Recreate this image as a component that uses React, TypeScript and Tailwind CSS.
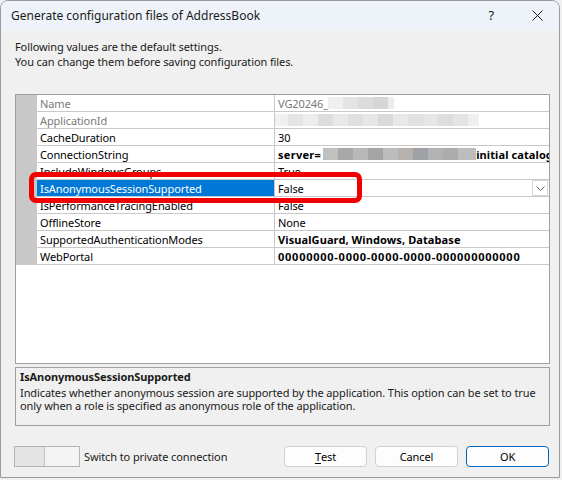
import React from 'react';

const font = "font-['Noto_Sans',sans-serif]";

// pixelated "blur" swatches covering redacted values
const nameBlur = ['bg-[#efefef]', 'bg-[#e4e4e4]', 'bg-[#dcdcdc]', 'bg-[#d6d6d6]', 'bg-[#ececec]'];
const appIdBlur = [
  'bg-[#f0f0f0]', 'bg-[#e4e4e4]', 'bg-[#ececec]', 'bg-[#dcdcdc]', 'bg-[#e8e8e8]', 'bg-[#e0e0e0]', 'bg-[#e6e6e6]',
  'bg-[#dadada]', 'bg-[#e8e8e8]', 'bg-[#e2e2e2]', 'bg-[#e6e6e6]', 'bg-[#dedede]', 'bg-[#e4e4e4]', 'bg-[#efefef]',
];
const connBlur = [
  'bg-[#c0c0c0]', 'bg-[#a8a8a8]', 'bg-[#b8b8b8]', 'bg-[#a4a4a4]', 'bg-[#bcbcbc]',
  'bg-[#b6b1ac]', 'bg-[#9ea2a6]', 'bg-[#b2b2b2]', 'bg-[#acacac]', 'bg-[#bdbdbd]',
];

function Blur({ colors, last = 15 }: { colors: string[]; last?: number }) {
  return (
    <div className="flex h-[12px] shrink-0">
      {colors.map((c, i) => (
        <div key={i} className={`${c} h-full`} style={{ width: i === colors.length - 1 ? last : 15 }} />
      ))}
    </div>
  );
}

type Row = { name: string; muted?: boolean; selected?: boolean; value: React.ReactNode };

const rows: Row[] = [
  {
    name: 'Name',
    muted: true,
    value: (
      <div className="flex items-center text-[#7a7a7a]">
        <span>VG20246_</span>
        <Blur colors={nameBlur} last={6} />
      </div>
    ),
  },
  {
    name: 'ApplicationId',
    muted: true,
    value: (
      <div className="-ml-[5px]">
        <Blur colors={appIdBlur} last={11} />
      </div>
    ),
  },
  { name: 'CacheDuration', value: <span>30</span> },
  {
    name: 'ConnectionString',
    value: (
      <div className="flex items-center font-bold whitespace-nowrap">
        <span className="tracking-[0.3px]">server=</span>
        <div className="ml-[2px]">
          <Blur colors={connBlur} last={18} />
        </div>
        <span className="tracking-[0.1px]">initial catalog=AddressBook</span>
      </div>
    ),
  },
  { name: 'IncludeWindowsGroups', value: <span>True</span> },
  { name: 'IsAnonymousSessionSupported', selected: true, value: <span>False</span> },
  { name: 'IsPerformanceTracingEnabled', value: <span>False</span> },
  { name: 'OfflineStore', value: <span>None</span> },
  {
    name: 'SupportedAuthenticationModes',
    value: <span className="font-bold tracking-[0.1px]">VisualGuard, Windows, Database</span>,
  },
  {
    name: 'WebPortal',
    value: <span className="font-bold tracking-[0.75px]">00000000-0000-0000-0000-000000000000</span>,
  },
];

function PropertyGrid() {
  return (
    <div className="relative h-[270px] border border-[#a0a0a0] bg-white">
      <div className="flex flex-col">
        {rows.map((r) => (
          <div key={r.name} className="flex h-[17px]">
            <div className="w-[21px] shrink-0 bg-[#c8c8c8]" />
            <div
              className={`flex w-[238px] shrink-0 items-center whitespace-nowrap border-b border-r border-[#c8c8c8] pl-[3px] ${
                r.selected ? 'bg-[#0078d7] text-white' : r.muted ? 'text-[#7a7a7a]' : 'text-black'
              }`}
            >
              {r.name}
            </div>
            <div className="flex min-w-0 flex-1 items-center overflow-hidden border-b border-[#c8c8c8] pl-[3px] pr-[1px] text-black">
              {r.value}
              {r.selected && (
                <div className="ml-auto flex h-[16px] w-[16px] items-center justify-center border border-[#d4d4d4] bg-white">
                  <svg width="9" height="5" viewBox="0 0 9 5" fill="none">
                    <path d="M0.5 0.5 L4.5 4.5 L8.5 0.5" stroke="#606060" strokeWidth="1" />
                  </svg>
                </div>
              )}
            </div>
          </div>
        ))}
      </div>
      {/* annotation around the selected property */}
      <div className="pointer-events-none absolute left-[13px] top-[77px] h-[31px] w-[333px] rounded-[7px] border-[5px] border-[#f00000]" />
    </div>
  );
}

function Button({ children, primary }: { children: React.ReactNode; primary?: boolean }) {
  return (
    <button
      className={`flex h-[21px] w-[83px] items-center justify-center rounded-[4px] bg-[#fdfdfd] text-black ${
        primary ? 'border border-[#0067c0]' : 'border border-[#d0d0d0]'
      }`}
    >
      {children}
    </button>
  );
}

export default function App() {
  return (
    <div className={`h-[480px] w-[562px] bg-[#f0f0f0] ${font} text-[11px] leading-[15px] tracking-[-0.1px] text-black`}>
      <div className="flex h-[478px] w-[560px] flex-col overflow-hidden rounded-t-[8px] border border-[#9a9a9a] bg-[#f0f0f0]">
        {/* title bar */}
        <div className="flex h-[29px] shrink-0 items-center bg-[#eef3f9] pl-[10px] pr-[16px]">
          <span className="text-[12px] tracking-normal text-[#1a1a1a]">Generate configuration files of AddressBook</span>
          <span className="ml-auto mr-[38px] text-[13px] text-[#1a1a1a]">?</span>
          <svg width="11" height="11" viewBox="0 0 11 11">
            <path d="M0.5 0.5 L10.5 10.5 M10.5 0.5 L0.5 10.5" stroke="#1a1a1a" strokeWidth="1" />
          </svg>
        </div>

        <div className="flex flex-1 flex-col pl-[14px] pr-[9px]">
          <div className="mt-[9px] text-[#1a1a1a]">
            <div>Following values are the default settings.</div>
            <div>You can change them before saving configuration files.</div>
          </div>

          <div className="mt-[25px]">
            <PropertyGrid />
          </div>

          <div className="mt-[3px] h-[59px] border border-[#a0a0a0] px-[4px] pt-[2px] leading-[13.5px] text-[#1a1a1a]">
            <div className="font-bold">IsAnonymousSessionSupported</div>
            <div className="mt-[2px] whitespace-nowrap">
              Indicates whether anonymous session are supported by the application. This option can be set to true
              <br />
              only when a role is specified as anonymous role of the application.
            </div>
          </div>

          <div className="mt-[20px] flex items-center pr-[1px]">
            <div className="-ml-[1px] flex h-[21px] w-[66px] border border-[#b4b4b4] bg-[#f4f4f4]">
              <div className="h-full w-[30px] border-r border-[#c4c4c4] bg-[#e4e4e4]" />
            </div>
            <span className="ml-[4px] text-[#1a1a1a]">Switch to private connection</span>
            <div className="ml-auto flex gap-[8px]">
              <Button>
                <span className="underline underline-offset-2">T</span>est
              </Button>
              <Button>Cancel</Button>
              <Button primary>OK</Button>
            </div>
          </div>
        </div>
      </div>
    </div>
  );
}
